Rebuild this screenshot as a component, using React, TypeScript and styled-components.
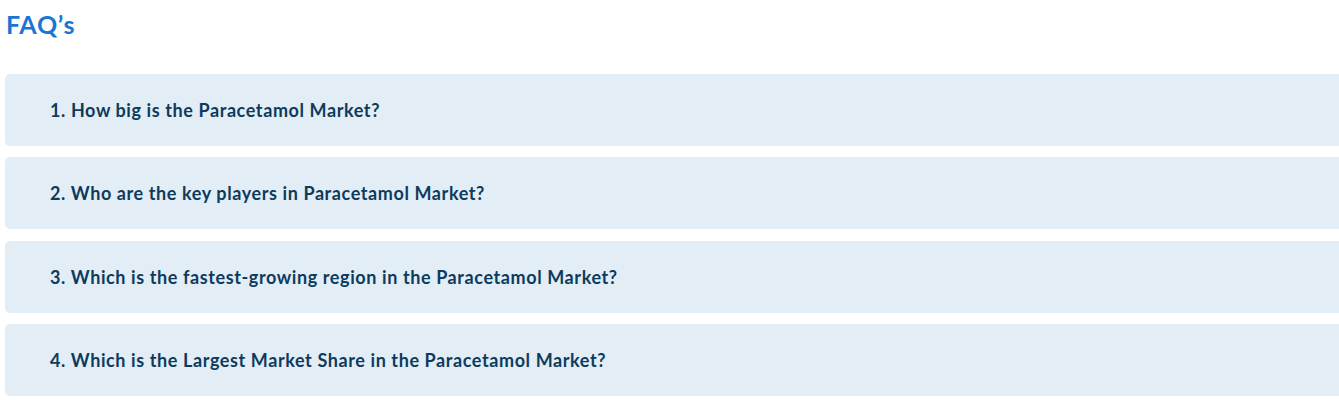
import styled, { createGlobalStyle } from 'styled-components'

const GlobalStyle = createGlobalStyle`
  body {
    margin: 0;
    overflow-x: hidden;
    background: #ffffff;
    font-family: Lato, "Noto Sans", sans-serif;
  }
`

const Section = styled.section`
  padding: 8px 0 0 5px;
`

const Title = styled.h2`
  margin: 0 0 0 1px;
  font-size: 25px;
  line-height: 32px;
  font-weight: 700;
  color: #1976d2;
  letter-spacing: 0.7px;
`

const List = styled.div`
  display: flex;
  flex-direction: column;
  gap: 11.33px;
  margin-top: 34px;
  width: 1345px;
`

const Item = styled.div`
  height: 72px;
  display: flex;
  align-items: center;
  padding-left: 45px;
  background: #e3edf6;
  border-radius: 5px;
`

const Question = styled.h3`
  margin: 0;
  font-size: 18px;
  font-weight: 700;
  letter-spacing: 0.6px;
  color: #0d3b5d;
`

const faqs = [
  'How big is the Paracetamol Market?',
  'Who are the key players in Paracetamol Market?',
  'Which is the fastest-growing region in the Paracetamol Market?',
  'Which is the Largest Market Share in the Paracetamol Market?',
]

const App = () => (
  <>
    <GlobalStyle />
    <Section>
      <Title>FAQ’s</Title>
      <List>
        {faqs.map((q, i) => (
          <Item key={q}>
            <Question>{i + 1}. {q}</Question>
          </Item>
        ))}
      </List>
    </Section>
  </>
)

export default App
